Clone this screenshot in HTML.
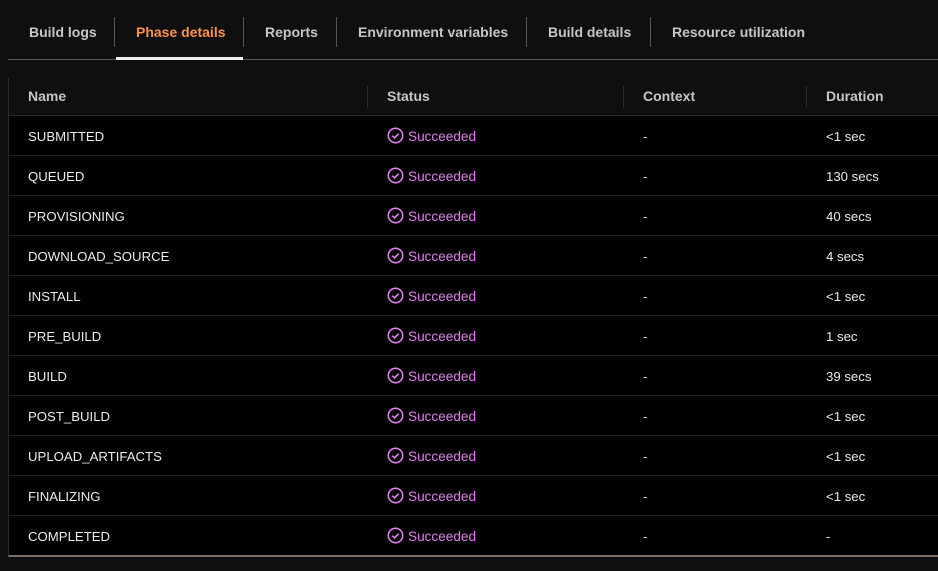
<!DOCTYPE html>
<html><head><style>
*{margin:0;padding:0;box-sizing:border-box}
body{width:938px;height:571px;background:#0f0f0f;font-family:"Liberation Sans",sans-serif;overflow:hidden;position:relative;color:#eaeded}
.tabs{position:absolute;left:8px;top:0;width:930px;height:60px;border-bottom:1px solid #5f5550}
.tab{position:absolute;top:24px;font-size:14px;font-weight:bold;color:#c6c6c6;white-space:nowrap}
.sep{position:absolute;top:17px;width:1px;height:30px;background:#5f5550}
.active{color:#ff9147}
.ul{position:absolute;left:116px;top:57px;width:127px;height:3px;background:#eee}
.table{position:absolute;left:8px;top:78px;width:930px;height:479px;background:#000;border-left:1px solid #2a2a2a;border-bottom:2px solid #7a706a}
.head{position:absolute;left:0;top:0;width:930px;height:38px;background:#0f0f0f;border-bottom:1px solid #2a2a2a}
.h{position:absolute;top:10px;font-size:14px;font-weight:bold;color:#c6c6c6}
.hs{position:absolute;top:8px;width:1px;height:22px;background:#2a2a2a}
.row{position:absolute;left:0;width:930px;height:40px;border-bottom:1px solid #1f1f1f;font-size:13.2px}
.row span{position:absolute;top:13px}
.st{color:#e07ff0;font-size:13.6px}
svg{position:absolute;top:11px;left:378px}
</style></head><body>
<div class="tabs">
<div class="tab" style="left:21px">Build logs</div>
<div class="sep" style="left:106px"></div>
<div class="tab active" style="left:128px">Phase details</div>
<div class="sep" style="left:235px"></div>
<div class="tab" style="left:257px">Reports</div>
<div class="sep" style="left:328px"></div>
<div class="tab" style="left:350px">Environment variables</div>
<div class="sep" style="left:518px"></div>
<div class="tab" style="left:540px">Build details</div>
<div class="sep" style="left:642px"></div>
<div class="tab" style="left:664px">Resource utilization</div>
</div>
<div class="ul"></div>
<div class="table">
<div class="head">
<div class="h" style="left:19px">Name</div>
<div class="hs" style="left:358px"></div><div class="h" style="left:378px">Status</div>
<div class="hs" style="left:614px"></div><div class="h" style="left:634px">Context</div>
<div class="hs" style="left:797px"></div><div class="h" style="left:817px">Duration</div>
</div>
<div id="rows"></div>
</div>
<script>
var d=[["SUBMITTED","<1 sec"],["QUEUED","130 secs"],["PROVISIONING","40 secs"],["DOWNLOAD_SOURCE","4 secs"],["INSTALL","<1 sec"],["PRE_BUILD","1 sec"],["BUILD","39 secs"],["POST_BUILD","<1 sec"],["UPLOAD_ARTIFACTS","<1 sec"],["FINALIZING","<1 sec"],["COMPLETED","-"]];
var h="";d.forEach(function(r,i){h+='<div class="row" style="top:'+(38+i*40)+'px'+(i==10?';border-bottom:none':'')+'"><span style="left:19px">'+r[0]+'</span><svg width="17" height="17" viewBox="0 0 16 16"><circle cx="8" cy="8" r="6.8" fill="none" stroke="#e07ff0" stroke-width="1.5"/><path d="M5 8.2l2.1 2.1L11 6.2" fill="none" stroke="#e07ff0" stroke-width="1.5"/></svg><span class="st" style="left:399px">Succeeded</span><span style="left:634px">-</span><span style="left:817px">'+r[1].replace("<","&lt;")+'</span></div>'});
document.getElementById("rows").innerHTML=h;
</script>
</body></html>
